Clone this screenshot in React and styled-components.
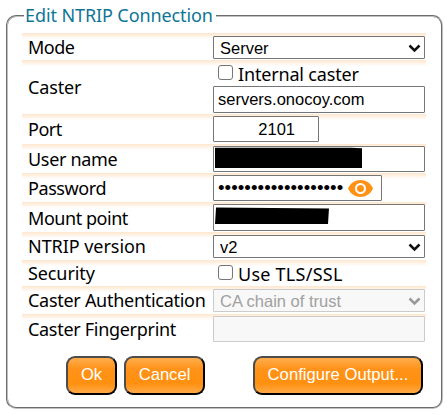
import React from 'react';
import styled, { createGlobalStyle, css } from 'styled-components';

const GlobalStyle = createGlobalStyle`
  *, *::before, *::after { box-sizing: border-box; }
  body {
    margin: 0;
    background: #fff;
    color: #000;
    font-family: "Noto Sans", "Open Sans", sans-serif;
    font-size: 18px;
    overflow: hidden;
  }
`;

const Panel = styled.fieldset`
  width: 437px;
  height: 404px;
  margin: 5px 0 0 6px;
  padding: 7px 14px 0;
  border: 2px groove #c8c8c8;
  border-color: #c0c0c0;
  border-radius: 10px;
  min-width: 0;
`;

const Title = styled.legend`
  height: 21px;
  margin-left: 2px;
  padding: 0 3px 0 1px;
  line-height: 21px;
  color: #0e7596;
  white-space: nowrap;
  letter-spacing: ${(p) => p.$spacing}px;
`;

const Row = styled.div`
  display: grid;
  grid-template-columns: 191px 212px;
  height: ${(p) => p.$height}px;
  width: 404px;
  background: linear-gradient(#ffe6cd, #fff 6px);
`;

const Label = styled.div`
  align-self: center;
  padding-left: 6px;
  padding-top: ${(p) => p.$drop || 0}px;
  line-height: 22px;
  white-space: nowrap;
  letter-spacing: ${(p) => p.$spacing || 0}px;
`;

const Field = styled.div`
  position: relative;
  padding-top: ${(p) => p.$top ?? 2}px;
  min-width: 0;
`;

const control = css`
  display: block;
  width: ${(p) => p.$width || 212}px;
  margin: 0;
  border: 1px solid #767676;
  border-radius: 1px;
  background: #fff;
  color: #000;
  font: 16.5px "Liberation Sans", Arial, sans-serif;
  outline: none;
  &:disabled {
    border-color: #cbcbcb;
    background: #f8f8f8;
    color: #a0a0a0;
    opacity: 1;
  }
`;

const Input = styled.input`
  ${control}
  height: ${(p) => p.$height || 26}px;
  padding: 0 4px;
  letter-spacing: ${(p) => p.$spacing || 0}px;
  text-align: ${(p) => p.$align || 'left'};
  padding-right: ${(p) => p.$end || 4}px;
`;

const PasswordInput = styled(Input)`
  font-size: 18.7px;
`;

const SelectBox = styled.select`
  ${control}
  appearance: none;
  height: 23px;
  padding: 0 24px 0 6px;
`;

const Chevron = styled.svg`
  position: absolute;
  right: 4px;
  top: ${(p) => p.$top}px;
  width: 13px;
  height: 9px;
  fill: none;
  stroke: ${(p) => (p.$muted ? '#999' : '#111')};
  stroke-width: 2.5;
`;

const Check = styled.label`
  display: flex;
  height: 15px;
  margin: ${(p) => p.$top}px 0 ${(p) => p.$bottom || 0}px 5px;
  gap: 5px;
  white-space: nowrap;
  letter-spacing: ${(p) => p.$spacing || 0}px;
`;

const Box = styled.input`
  appearance: none;
  width: 15px;
  height: 15px;
  margin: 0;
  border: 1.4px solid #767676;
  border-radius: 3px;
  background: #fff;
  flex: none;
`;

const CheckText = styled.span`
  line-height: 18px;
`;

const Redaction = styled.svg`
  position: absolute;
  left: 2px;
  top: ${(p) => p.$top}px;
`;

const EyeIcon = styled.svg`
  position: absolute;
  left: 135px;
  top: 7px;
  width: 25px;
  height: 17px;
`;

const Actions = styled.div`
  display: flex;
  gap: 7px;
  margin: 13px 4px 0 44px;
`;

const Button = styled.button`
  width: ${(p) => p.$width}px;
  height: 39px;
  margin: 0;
  margin-left: ${(p) => (p.$push ? 'auto' : 0)};
  padding: 0 0 1px;
  border: 2px outset #000;
  border-color: #4c4c4c #000 #000 #4c4c4c;
  border-radius: 9px;
  background: linear-gradient(#ffad4e 0%, #ff9218 32%, #ff9010 72%, #ffa945 100%);
  color: #fff;
  font: 16.6px "Liberation Sans", Arial, sans-serif;
  letter-spacing: ${(p) => p.$spacing || 0}px;
  white-space: nowrap;
`;

function Select({ children, top = 3, disabled }) {
  return (
    <Field $top={top}>
      <SelectBox disabled={disabled}>
        <option>{children}</option>
      </SelectBox>
      <Chevron $top={top + 8} $muted={disabled} viewBox="0 0 13 9">
        <path d="M1.5 1.5 6.5 6.5 11.5 1.5" />
      </Chevron>
    </Field>
  );
}

function Checkbox({ children, ...rest }) {
  return (
    <Check {...rest}>
      <Box type="checkbox" />
      <CheckText>{children}</CheckText>
    </Check>
  );
}

export default function App() {
  return (
    <>
      <GlobalStyle />
      <Panel>
        <Title $spacing={-0.1}>Edit NTRIP Connection</Title>
        <Row $height={27}>
          <Label $spacing={-0.5}>Mode</Label>
          <Select>Server</Select>
        </Row>
        <Row $height={54}>
          <Label $spacing={-0.15}>Caster</Label>
          <Field $top={0}>
            <Checkbox $top={5} $bottom={6} $spacing={-0.17}>Internal caster</Checkbox>
            <Input $height={27} defaultValue="servers.onocoy.com" />
          </Field>
        </Row>
        <Row $height={30}>
          <Label $spacing={-0.5}>Port</Label>
          <Field>
            <Input $width={106} $align="right" $end={23} defaultValue="2101" />
          </Field>
        </Row>
        <Row $height={29}>
          <Label $spacing={-0.32}>User name</Label>
          <Field>
            <Input />
            <Redaction $top={3} width="148" height="22">
              <path d="M0 .8H136L147 1.2V21H0Z" fill="#000" />
            </Redaction>
          </Field>
        </Row>
        <Row $height={29}>
          <Label $spacing={-0.42}>Password</Label>
          <Field>
            <PasswordInput type="password" $width={169} $end={38} $spacing={0.05} defaultValue="abcdefghijklmnopqrst" />
            <EyeIcon viewBox="0 0 25 17">
              <path d="M0 8.5C5-2.8 20-2.8 25 8.5C20 19.8 5 19.8 0 8.5Z" fill="#ff9216" />
              <circle cx="12.5" cy="8.5" r="4.5" fill="none" stroke="#fff" strokeWidth="2" />
            </EyeIcon>
          </Field>
        </Row>
        <Row $height={30}>
          <Label $spacing={-0.45} $drop={2}>Mount point</Label>
          <Field>
            <Input $height={27} />
            <Redaction $top={5} width="115" height="18">
              <path d="M1 .5 114 1.5 113 17H0Z" fill="#000" />
            </Redaction>
          </Field>
        </Row>
        <Row $height={28}>
          <Label $spacing={-0.05}>NTRIP version</Label>
          <Select>v2</Select>
        </Row>
        <Row $height={26}>
          <Label $spacing={-0.1}>Security</Label>
          <Field $top={0}>
            <Checkbox $top={5} $spacing={0.25}>Use TLS/SSL</Checkbox>
          </Field>
        </Row>
        <Row $height={28}>
          <Label $spacing={-0.28}>Caster Authentication</Label>
          <Select disabled>CA chain of trust</Select>
        </Row>
        <Row $height={29}>
          <Label $spacing={-0.3}>Caster Fingerprint</Label>
          <Field>
            <Input disabled />
          </Field>
        </Row>
        <Actions>
          <Button $width={51}>Ok</Button>
          <Button $width={81}>Cancel</Button>
          <Button $width={170} $push $spacing={0.03}>Configure Output...</Button>
        </Actions>
      </Panel>
    </>
  );
}
